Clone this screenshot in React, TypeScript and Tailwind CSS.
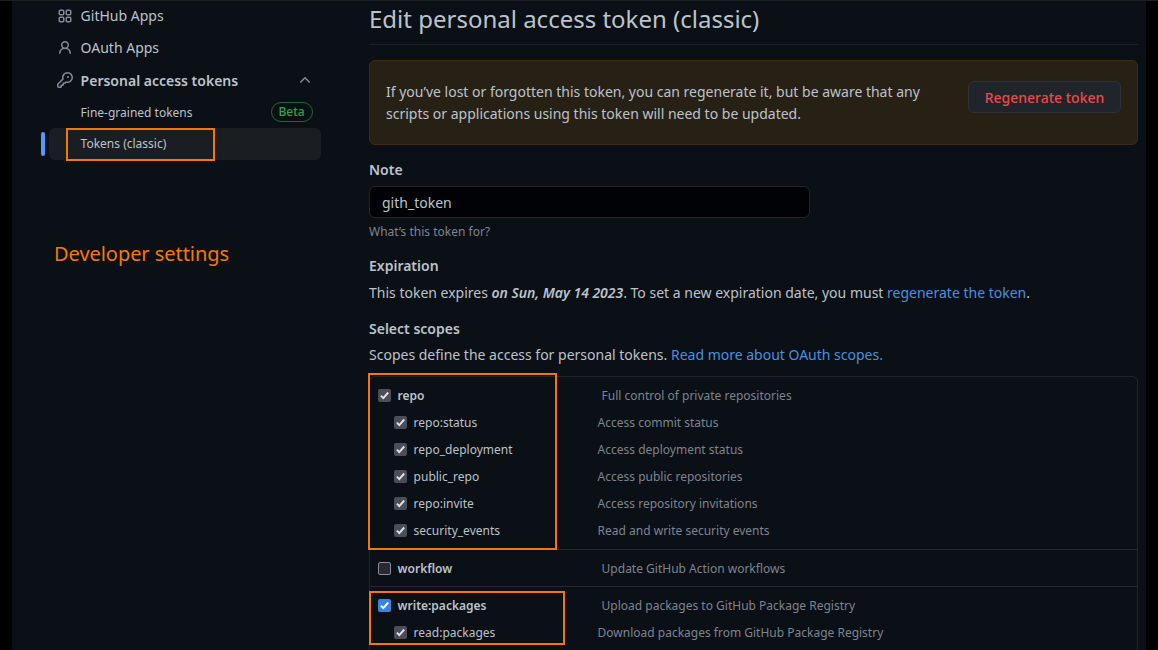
import React from "react";

type IconProps = { d: string; className?: string };

function Icon({ d, className = "" }: IconProps) {
  return (
    <svg viewBox="0 0 16 16" width="16" height="16" fill="currentColor" className={`shrink-0 ${className}`} aria-hidden="true">
      <path d={d} />
    </svg>
  );
}

const PERSON =
  "M10.561 8.073a6.005 6.005 0 0 1 3.432 5.142.75.75 0 1 1-1.498.07 4.5 4.5 0 0 0-8.99 0 .75.75 0 0 1-1.498-.07 6.004 6.004 0 0 1 3.431-5.142 3.999 3.999 0 1 1 5.123 0ZM10.5 5a2.5 2.5 0 1 0-5 0 2.5 2.5 0 0 0 5 0Z";
const KEY =
  "M10.5 0a5.499 5.499 0 1 1-1.288 10.848l-.932.932a.749.749 0 0 1-.53.22H7v.75a.749.749 0 0 1-.22.53l-.5.5a.749.749 0 0 1-.53.22H5v.75a.749.749 0 0 1-.22.53l-.5.5a.749.749 0 0 1-.53.22h-2A1.75 1.75 0 0 1 0 14.25v-2c0-.199.079-.389.22-.53l4.932-4.932A5.5 5.5 0 0 1 10.5 0Zm-4 5.5c-.001.431.069.86.205 1.269a.75.75 0 0 1-.181.768L1.5 12.56v1.69c0 .138.112.25.25.25h1.69l.06-.06v-1.19a.75.75 0 0 1 .75-.75h1.19l.06-.06v-1.19a.75.75 0 0 1 .75-.75h1.19l1.023-1.025a.75.75 0 0 1 .768-.18A4 4 0 1 0 6.5 5.5ZM11 6a1 1 0 1 1 0-2 1 1 0 0 1 0 2Z";
const CHEVRON_UP =
  "M3.22 10.53a.749.749 0 0 1 0-1.06l4.25-4.25a.749.749 0 0 1 1.06 0l4.25 4.25a.749.749 0 1 1-1.06 1.06L8 6.811 4.28 10.53a.749.749 0 0 1-1.06 0Z";

function AppsIcon() {
  return (
    <svg viewBox="0 0 16 16" width="16" height="16" fill="none" stroke="currentColor" strokeWidth="1.5" className="shrink-0 text-[#848c95]" aria-hidden="true">
      <rect x="2.25" y="2.25" width="4.5" height="4.5" rx="1" />
      <rect x="9.25" y="2.25" width="4.5" height="4.5" rx="1" />
      <rect x="2.25" y="9.25" width="4.5" height="4.5" rx="1" />
      <rect x="9.25" y="9.25" width="4.5" height="4.5" rx="1" />
    </svg>
  );
}

type BoxState = "locked" | "checked" | "empty";

function CheckBox({ state }: { state: BoxState }) {
  if (state === "empty") {
    return <span className="mb-px h-[13px] w-[13px] shrink-0 rounded-[2px] border border-[#8d8c96] bg-[#2a2933]" />;
  }
  const tone = state === "checked" ? "bg-[#3584e4] text-white" : "bg-[#4b4d58] text-[#e2e3e6]";
  return (
    <span className={`mb-px flex h-[13px] w-[13px] shrink-0 items-center justify-center rounded-[2px] ${tone}`}>
      <svg viewBox="0 0 13 13" width="13" height="13" fill="none" stroke="currentColor" strokeWidth="1.9" aria-hidden="true">
        <path d="M2.9 6.7 5.3 9.1 10.2 3.5" />
      </svg>
    </span>
  );
}

function Scope({ name, text, state, child = false }: { name: string; text: string; state: BoxState; child?: boolean }) {
  return (
    <div className={`flex h-[27px] items-center text-xs ${child ? "pl-[23.6px]" : "pl-[7.6px]"}`}>
      <CheckBox state={state} />
      <span className={child ? "ml-[7px] w-[184px]" : "ml-[7px] w-[204px] font-semibold"}>{name}</span>
      <span className="whitespace-nowrap text-[#7d858e]">{text}</span>
    </div>
  );
}

const repoScopes = [
  ["repo:status", "Access commit status"],
  ["repo_deployment", "Access deployment status"],
  ["public_repo", "Access public repositories"],
  ["repo:invite", "Access repository invitations"],
  ["security_events", "Read and write security events"],
];

function Sidebar() {
  return (
    <aside className="w-[357px] shrink-0 pl-[28px] text-sm">
      <div className="flex h-[30px] items-center gap-2 pl-[16.6px]">
        <AppsIcon />
        <span>GitHub Apps</span>
      </div>
      <div className="flex h-[33px] items-center gap-2 pl-[16.6px]">
        <Icon d={PERSON} className="text-[#848c95]" />
        <span className="pt-px">OAuth Apps</span>
      </div>
      <div className="flex h-8 items-center gap-2 pl-[16.6px]">
        <Icon d={KEY} className="text-[#848c95]" />
        <span className="w-[208px] pt-px font-semibold">Personal access tokens</span>
        <Icon d={CHEVRON_UP} className="text-[#848c95]" />
      </div>
      <div className="flex h-8 items-center pl-[40.6px] text-xs">
        <span className="w-[190px] pt-px">Fine-grained tokens</span>
        <span className="flex h-[20px] w-[42px] items-center justify-center rounded-full border border-[#1d6a30] font-medium text-[#37a447]">Beta</span>
      </div>
      <div className="flex h-8 items-center text-xs">
        <span className="ml-[0.6px] h-6 w-1 rounded-md bg-[#549af5]" />
        <span className="ml-1 flex h-8 w-[272px] items-center rounded-md bg-[#1a1e22] pl-8">Tokens (classic)</span>
      </div>
      <p className="mt-[79px] pl-[14px] text-[20px] leading-[30px] tracking-[-0.05px] text-[#f57900]">Developer settings</p>
    </aside>
  );
}

function Main() {
  return (
    <main className="w-[769px] shrink-0 text-sm">
      <h1 className="h-[44px] border-b border-[#1c2027] text-2xl leading-[35px]">Edit personal access token (classic)</h1>
      <section className="mt-[15px] flex h-[85px] items-start rounded-md border border-[#3d2c10] bg-[#272015] px-4 pt-[20px]">
        <p className="w-[582px] shrink-0 leading-[21px]">
          If you’ve lost or forgotten this token, you can regenerate it, but be aware that any
          <span className="block pt-px">scripts or applications using this token will need to be updated.</span>
        </p>
        <button className="h-8 w-[153px] shrink-0 rounded-md border border-[#2e3238] bg-[#20242b] pt-px font-medium text-[#e94b46]">Regenerate token</button>
      </section>
      <label className="mt-[14px] block leading-[21px] font-semibold">Note</label>
      <div className="mt-[6px] flex h-8 w-[441px] items-center rounded-md border border-[#23272d] bg-[#010206] pt-px pl-3">gith_token</div>
      <p className="mt-[5px] text-xs leading-[18px] text-[#7d858e]">What’s this token for?</p>
      <h2 className="mt-[14px] leading-[21px] font-semibold">Expiration</h2>
      <p className="mt-[6px] leading-[21px]">
        This token expires <em className="font-semibold tracking-[-0.04px]">on Sun, May 14 2023</em>. To set a new expiration date, you must{" "}
        <a className="text-[#4a8fe0]">regenerate the token</a>.
      </p>
      <h2 className="mt-[15px] leading-[21px] font-semibold">Select scopes</h2>
      <p className="mt-[5px] leading-[21px]">
        Scopes define the access for personal tokens. <a className="text-[#4a8fe0]">Read more about OAuth scopes.</a>
      </p>
      <div className="mt-[11px] h-[290px] rounded-t-md border border-b-0 border-[#20242a]">
        <div className="h-[173px] border-b border-[#272b31] pt-[5px]">
          <Scope name="repo" text="Full control of private repositories" state="locked" />
          {repoScopes.map(([name, text]) => (
            <Scope key={name} name={name} text={text} state="locked" child />
          ))}
        </div>
        <div className="h-[37px] border-b border-[#272b31] pt-[5px]">
          <Scope name="workflow" text="Update GitHub Action workflows" state="empty" />
        </div>
        <div className="pt-[5px]">
          <Scope name="write:packages" text="Upload packages to GitHub Package Registry" state="checked" />
          <Scope name="read:packages" text="Download packages from GitHub Package Registry" state="locked" child />
        </div>
      </div>
    </main>
  );
}

export default function App() {
  return (
    <div className="relative h-[650px] w-[1158px] overflow-hidden bg-black font-['Noto_Sans',sans-serif] text-[#bcc3cb]">
      <div className="mx-[12px] flex h-full w-[1134px] border-t border-[#1d1e1f] bg-[#0b0f16]">
        <Sidebar />
        <Main />
      </div>
      <div className="absolute top-0 left-0 h-px w-full bg-[#1d1e1f]" />
      <div className="absolute top-[128px] left-[66px] h-[33px] w-[149px] border-2 border-[#f57900]" />
      <div className="absolute top-[373px] left-[368px] h-[177px] w-[189px] border-2 border-[#f57900]" />
      <div className="absolute top-[591px] left-[369px] h-[54px] w-[196px] border-2 border-[#f57900]" />
    </div>
  );
}
